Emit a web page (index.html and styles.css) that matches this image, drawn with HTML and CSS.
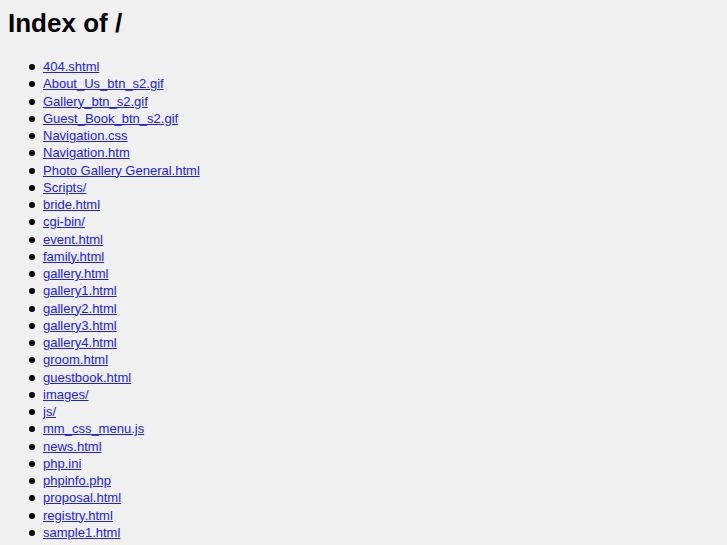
FILE: index.html
```html
<!DOCTYPE html>
<html>
<head>
<title>Index of /</title>
<link rel="stylesheet" href="styles.css">
</head>
<body>
<h1>Index of /</h1>
<ul class="listing">
<li><a href="/404.shtml">404.shtml</a></li>
<li><a href="/About_Us_btn_s2.gif">About_Us_btn_s2.gif</a></li>
<li><a href="/Gallery_btn_s2.gif">Gallery_btn_s2.gif</a></li>
<li><a href="/Guest_Book_btn_s2.gif">Guest_Book_btn_s2.gif</a></li>
<li><a href="/Navigation.css">Navigation.css</a></li>
<li><a href="/Navigation.htm">Navigation.htm</a></li>
<li><a href="/Photo%20Gallery%20General.html">Photo Gallery General.html</a></li>
<li><a href="/Scripts/">Scripts/</a></li>
<li><a href="/bride.html">bride.html</a></li>
<li><a href="/cgi-bin/">cgi-bin/</a></li>
<li><a href="/event.html">event.html</a></li>
<li><a href="/family.html">family.html</a></li>
<li><a href="/gallery.html">gallery.html</a></li>
<li><a href="/gallery1.html">gallery1.html</a></li>
<li><a href="/gallery2.html">gallery2.html</a></li>
<li><a href="/gallery3.html">gallery3.html</a></li>
<li><a href="/gallery4.html">gallery4.html</a></li>
<li><a href="/groom.html">groom.html</a></li>
<li><a href="/guestbook.html">guestbook.html</a></li>
<li><a href="/images/">images/</a></li>
<li><a href="/js/">js/</a></li>
<li><a href="/mm_css_menu.js">mm_css_menu.js</a></li>
<li><a href="/news.html">news.html</a></li>
<li><a href="/php.ini">php.ini</a></li>
<li><a href="/phpinfo.php">phpinfo.php</a></li>
<li><a href="/proposal.html">proposal.html</a></li>
<li><a href="/registry.html">registry.html</a></li>
<li><a href="/sample1.html">sample1.html</a></li>
<li><a href="/sample2.html">sample2.html</a></li>
<li><a href="/sample3.html">sample3.html</a></li>
</ul>
</body>
</html>
```

FILE: styles.css
```css
/* Plain directory listing */
body {
  margin: 8px;
  background: #f0f0f0;
  color: #000;
  font-family: "Liberation Sans", Arial, sans-serif;
  font-size: 13px;
  line-height: 17.25px;
}

h1 {
  font-size: 26px;
  line-height: 30px;
  margin: 0 0 20px;
}

.listing {
  margin: 0;
  padding-left: 35px;
  list-style: none;
}

/* bigger round bullets than the default marker */
.listing li::before {
  content: "";
  display: inline-block;
  width: 6px;
  height: 6px;
  border-radius: 50%;
  background: #000;
  margin-left: -14px;
  margin-right: 8px;
  vertical-align: 1px;
}

.listing a {
  color: #2020ee;
}
```
